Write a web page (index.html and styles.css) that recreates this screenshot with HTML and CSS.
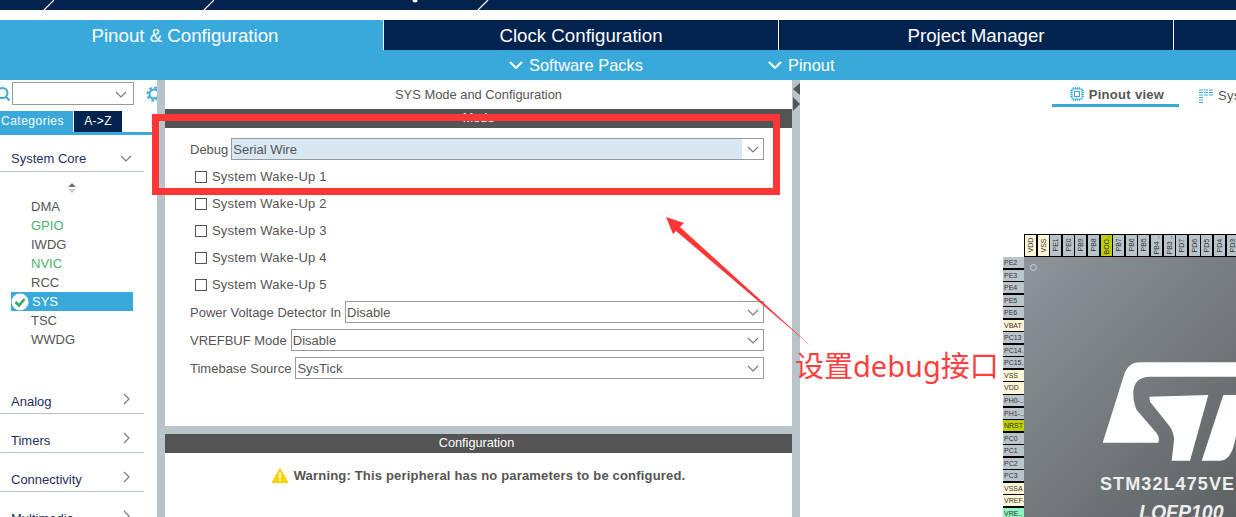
FILE: index.html
```html
<!DOCTYPE html>
<html lang="zh">

<head>
    <meta charset="UTF-8">
    <title>SYS Mode and Configuration</title>
    <link rel="stylesheet" href="styles.css">
</head>

<body>
    <div class="top-strip">
        <svg class="strip-marks" width="520" height="10" viewBox="0 0 520 10">
            <path d="M44 10 L54 0 M204 10 L214 0 M478 10 L488 0" stroke="#fff" stroke-width="1.2" fill="none" />
            <circle cx="415" cy="0" r="2.5" fill="#fff" />
        </svg>
    </div>

    <div class="main-tabs">
        <div class="main-tab active">Pinout &amp; Configuration</div>
        <div class="main-tab">Clock Configuration</div>
        <div class="main-tab">Project Manager</div>
        <div class="main-tab last"></div>
    </div>

    <div class="sub-bar">
        <div class="sub-item packs">
            <svg class="sub-chevron" viewBox="0 0 14 8"><path d="M1 1 L7 7 L13 1" /></svg>
            Software Packs
        </div>
        <div class="sub-item">
            <svg class="sub-chevron" viewBox="0 0 14 8"><path d="M1 1 L7 7 L13 1" /></svg>
            Pinout
        </div>
    </div>

    <div class="workspace">
        <aside class="sidebar">
            <div class="search-row">
                <svg class="search-icon" viewBox="0 0 12 14">
                    <circle cx="2.5" cy="6" r="5" />
                    <path d="M6 10 L9.5 13.5" />
                </svg>
                <div class="search-box">
                    <svg class="chevron-down" viewBox="0 0 12 7"><path d="M1 1 L6 6 L11 1" /></svg>
                </div>
                <svg class="gear-icon" viewBox="0 0 16 16">
                    <circle cx="8" cy="8" r="4.6" fill="none" stroke="#39a9dc" stroke-width="2" />
                    <circle cx="8" cy="8" r="6.6" fill="none" stroke="#39a9dc" stroke-width="2" stroke-dasharray="2.6 2.58" />
                </svg>
            </div>
            <div class="side-tabs">
                <div class="side-tab active">Categories</div>
                <div class="side-tab">A-&gt;Z</div>
            </div>

            <div class="group first">
                <span>System Core</span>
                <svg class="chevron-down" viewBox="0 0 12 7"><path d="M1 1 L6 6 L11 1" /></svg>
            </div>
            <div class="scroll-arrows">
                <div class="arrow-up"></div>
                <div class="arrow-down"></div>
            </div>
            <ul class="peripherals">
                <li>DMA</li>
                <li class="ok">GPIO</li>
                <li>IWDG</li>
                <li class="ok">NVIC</li>
                <li>RCC</li>
                <li class="selected">
                    <svg class="check-icon" viewBox="0 0 18 18">
                        <circle cx="9" cy="9" r="8.5" fill="#fff" />
                        <path d="M4.5 9 L8 12.5 L13.5 6" fill="none" stroke="#3aa76d" stroke-width="2.6" />
                    </svg>
                    SYS
                </li>
                <li>TSC</li>
                <li>WWDG</li>
            </ul>

            <div class="group analog">
                <span>Analog</span>
                <svg class="chevron-right" viewBox="0 0 7 12"><path d="M1 1 L6 6 L1 11" /></svg>
            </div>
            <div class="group">
                <span>Timers</span>
                <svg class="chevron-right" viewBox="0 0 7 12"><path d="M1 1 L6 6 L1 11" /></svg>
            </div>
            <div class="group">
                <span>Connectivity</span>
                <svg class="chevron-right" viewBox="0 0 7 12"><path d="M1 1 L6 6 L1 11" /></svg>
            </div>
            <div class="group">
                <span>Multimedia</span>
                <svg class="chevron-right" viewBox="0 0 7 12"><path d="M1 1 L6 6 L1 11" /></svg>
            </div>
        </aside>

        <div class="gutter"></div>

        <section class="config-panel">
            <div class="mode-area">
                <div class="panel-title">SYS Mode and Configuration</div>
                <div class="dark-bar">Mode</div>
                <div class="mode-form">
                    <div class="field debug">
                        <label>Debug</label>
                        <div class="combo filled">
                            <span>Serial Wire</span>
                            <i><svg class="chevron-down" viewBox="0 0 12 7"><path d="M1 1 L6 6 L11 1" /></svg></i>
                        </div>
                    </div>
                    <div class="checks">
                        <div class="check-row"><b></b>System Wake-Up 1</div>
                        <div class="check-row"><b></b>System Wake-Up 2</div>
                        <div class="check-row"><b></b>System Wake-Up 3</div>
                        <div class="check-row"><b></b>System Wake-Up 4</div>
                        <div class="check-row"><b></b>System Wake-Up 5</div>
                    </div>
                    <div class="field">
                        <label>Power Voltage Detector In</label>
                        <div class="combo">
                            <span>Disable</span>
                            <i><svg class="chevron-down" viewBox="0 0 12 7"><path d="M1 1 L6 6 L11 1" /></svg></i>
                        </div>
                    </div>
                    <div class="field">
                        <label>VREFBUF Mode</label>
                        <div class="combo">
                            <span>Disable</span>
                            <i><svg class="chevron-down" viewBox="0 0 12 7"><path d="M1 1 L6 6 L11 1" /></svg></i>
                        </div>
                    </div>
                    <div class="field">
                        <label>Timebase Source</label>
                        <div class="combo">
                            <span>SysTick</span>
                            <i><svg class="chevron-down" viewBox="0 0 12 7"><path d="M1 1 L6 6 L11 1" /></svg></i>
                        </div>
                    </div>
                </div>
            </div>
            <div class="config-area">
                <div class="dark-bar config-title">Configuration</div>
                <div class="warning">
                    <svg class="warning-icon" viewBox="0 0 16 15">
                        <path d="M8 0.5 L15.8 14.5 L0.2 14.5 Z" fill="#ffcf00" stroke="#ffcf00" stroke-linejoin="round" />
                        <path d="M8 4.5 L8 10 M8 11.2 L8 13" stroke="#fff" stroke-width="1.8" />
                    </svg>
                    Warning: This peripheral has no parameters to be configured.
                </div>
            </div>
        </section>

        <div class="gutter collapse">
            <svg width="8" height="32" viewBox="0 0 8 32">
                <path d="M8 3 L1 9 L8 15 Z M1 17 L8 24 L1 31 Z" fill="#555" />
            </svg>
        </div>

        <section class="pinout">
            <div class="view-tabs">
                <div class="view-tab active">
                    <svg class="view-icon" viewBox="0 0 14 14">
                        <rect x="2" y="2" width="10" height="10" fill="none" stroke="#39a9dc" />
                        <rect x="4.5" y="4.5" width="5" height="5" fill="none" stroke="#39a9dc" />
                        <path d="M3.5 0 V2 M5.5 0 V2 M7.5 0 V2 M9.5 0 V2 M3.5 12 V14 M5.5 12 V14 M7.5 12 V14 M9.5 12 V14 M0 3.5 H2 M0 5.5 H2 M0 7.5 H2 M0 9.5 H2 M12 3.5 H14 M12 5.5 H14 M12 7.5 H14 M12 9.5 H14" stroke="#39a9dc" stroke-width="0.9" />
                    </svg>
                    Pinout view
                </div>
                <div class="view-tab">
                    <svg class="view-icon" viewBox="0 0 14 14">
                        <path d="M0 1 H4 M5 1 H9 M10 1 H14 M0 3.5 H4 M5 3.5 H9 M10 3.5 H14 M0 6 H4 M5 6 H9 M10 6 H14 M0 8.5 H4 M0 11 H4 M0 13.5 H4" stroke="#39a9dc" stroke-width="1.1" />
                    </svg>
                    System view
                </div>
            </div>

            <div class="chip">
                <div class="chip-corner"></div>
                <div class="pins-top">
                    <div class="pin power"><span>VDD</span></div>
                    <div class="pin power"><span>VSS</span></div>
                    <div class="pin"><span>PE1</span></div>
                    <div class="pin"><span>PE0</span></div>
                    <div class="pin"><span>PB9</span></div>
                    <div class="pin"><span>PB8</span></div>
                    <div class="pin boot"><span>BOO..</span></div>
                    <div class="pin"><span>PB7</span></div>
                    <div class="pin"><span>PB6</span></div>
                    <div class="pin"><span>PB5</span></div>
                    <div class="pin"><span>PB4 ..</span></div>
                    <div class="pin"><span>PB3 ..</span></div>
                    <div class="pin"><span>PD7</span></div>
                    <div class="pin"><span>PD6</span></div>
                    <div class="pin"><span>PD5</span></div>
                    <div class="pin"><span>PD4</span></div>
                    <div class="pin"><span>PD3</span></div>
                </div>
                <div class="pins-left">
                    <div class="pin">PE2</div>
                    <div class="pin">PE3</div>
                    <div class="pin">PE4</div>
                    <div class="pin">PE5</div>
                    <div class="pin">PE6</div>
                    <div class="pin power">VBAT</div>
                    <div class="pin">PC13</div>
                    <div class="pin">PC14..</div>
                    <div class="pin">PC15..</div>
                    <div class="pin power">VSS</div>
                    <div class="pin power">VDD</div>
                    <div class="pin">PH0-..</div>
                    <div class="pin">PH1-..</div>
                    <div class="pin boot">NRST</div>
                    <div class="pin">PC0</div>
                    <div class="pin">PC1</div>
                    <div class="pin">PC2</div>
                    <div class="pin">PC3</div>
                    <div class="pin power">VSSA</div>
                    <div class="pin power">VREF-</div>
                    <div class="pin ref">VRE..</div>
                </div>
                <div class="chip-body">
                    <div class="pin-one"></div>
                    <svg class="st-logo" width="212" height="260" viewBox="0 0 212 260">
                        <path d="M78.7 185.7 L100 118 Q104 105.3 116 105.3 L212 105.3 L212 119.7 L126 119.7 Q109.3 120 109.3 136.3 Q109.3 146 112.7 153 L132.7 176.3 Q136 181 134.3 185.7 Z" fill="#fff" />
                        <path d="M125.3 139.7 L184.3 138 L166 203.7 L147.7 203.7 L150 183 Q150 176 146 169.7 L126 144.7 Z" fill="#fff" />
                        <path d="M199.3 138 L212 138 L212 179 Q208 203.7 196 203.7 L177.7 203.7 Z" fill="#fff" />
                    </svg>
                    <div class="chip-name">STM32L475VE</div>
                    <div class="chip-package">LQFP100</div>
                </div>
            </div>
        </section>
    </div>

    <!-- annotation drawn over the screenshot -->
    <div class="mark-box"></div>
    <svg class="mark-arrow" width="160" height="140" viewBox="0 0 160 140">
        <path d="M6 7 L24 13 L20 17 L152 137 L16 21 L13 24 Z" fill="#ff3636" />
    </svg>
    <div class="mark-text">设置debug接口</div>
</body>

</html>
```

FILE: styles.css
```css
* {
    box-sizing: border-box;
}

body {
    margin: 0;
    width: 1236px;
    height: 517px;
    overflow: hidden;
    position: relative;
    background: white;
    font-family: "Liberation Sans", Arial, sans-serif;
    font-size: 13px;
    color: #555;
}

svg {
    display: block;
    flex: none;
}

.top-strip {
    height: 10px;
    background: #02234d;
}

.main-tabs {
    display: flex;
    height: 30px;
    margin-top: 10px;
    gap: 1px;
}

.main-tab {
    width: 394px;
    background: #02234d;
    color: white;
    font-size: 18.7px;
    line-height: 31px;
    text-align: center;
}

.main-tab.active {
    width: 383px;
    padding-right: 13px;
    background: #39a9dc;
}

.main-tab.last {
    flex: 1;
}

.sub-bar {
    display: flex;
    height: 30px;
    padding-left: 509px;
    background: #39a9dc;
    color: white;
    font-size: 16.4px;
}

.sub-item {
    display: flex;
    align-items: center;
    gap: 6px;
}

.sub-item.packs {
    width: 259px;
}

.sub-chevron {
    width: 14px;
    height: 8px;
    fill: none;
    stroke: white;
    stroke-width: 2;
}

.workspace {
    display: flex;
    height: 437px;
}

.gutter {
    width: 8px;
    background: #b8c4ca;
}

/* left column */
.sidebar {
    width: 157px;
    overflow: hidden;
}

.search-row {
    display: flex;
    align-items: center;
    height: 23px;
    margin-top: 2px;
}

.search-icon {
    width: 12px;
    height: 14px;
    fill: none;
    stroke: #39a9dc;
    stroke-width: 2;
}

.search-box {
    position: relative;
    width: 122px;
    height: 23px;
    border: 1px solid #999;
}

.search-box .chevron-down {
    position: absolute;
    right: 6px;
    top: 8px;
}

.chevron-down {
    width: 12px;
    height: 7px;
    fill: none;
    stroke: #777;
    stroke-width: 1.1;
}

.chevron-right {
    width: 7px;
    height: 12px;
    fill: none;
    stroke: #777;
    stroke-width: 1.1;
}

.gear-icon {
    width: 16px;
    height: 16px;
    margin-left: 12px;
    margin-right: -5px;
}

.side-tabs {
    display: flex;
    gap: 1px;
    height: 24px;
    margin-top: 6px;
    border-bottom: 3px solid #39a9dc;
}

.side-tab {
    width: 48px;
    background: #02234d;
    color: white;
    font-size: 12px;
    letter-spacing: 0.3px;
    line-height: 21px;
    text-align: center;
}

.side-tab.active {
    width: 73px;
    padding-left: 1px;
    background: #39a9dc;
    letter-spacing: 0.5px;
    text-align: left;
}

.group {
    display: flex;
    align-items: flex-end;
    justify-content: space-between;
    width: 144px;
    height: 39px;
    padding: 0 14px 3px 11px;
    border-bottom: 1px solid #b8c4ca;
    color: #1f2f63;
    line-height: 16px;
}

.group svg {
    margin-bottom: 5px;
}

.group.first {
    height: 37px;
    padding: 0 12px 4px 11px;
}

.scroll-arrows {
    display: flex;
    flex-direction: column;
    align-items: center;
    gap: 2px;
    width: 143px;
    height: 25px;
    padding-top: 11px;
}

.arrow-up {
    border: 4px solid transparent;
    border-top: 0;
    border-bottom: 4px solid #777;
}

.arrow-down {
    border: 4px solid transparent;
    border-bottom: 0;
    border-top: 4px solid #ccc;
}

.peripherals {
    list-style: none;
    margin: 0;
    padding: 0 0 0 11px;
    width: 133px;
}

.peripherals li {
    height: 19px;
    padding-left: 20px;
    line-height: 19px;
}

.peripherals .ok {
    color: #4cb56f;
}

.peripherals .selected {
    display: flex;
    align-items: center;
    gap: 3px;
    padding-left: 0;
    background: #39a9dc;
    color: white;
}

.check-icon {
    width: 18px;
    height: 18px;
}

.group.analog {
    height: 65px;
}

/* middle column */
.config-panel {
    display: flex;
    flex-direction: column;
    width: 627px;
    background: #b8c4ca;
}

.mode-area {
    height: 346px;
    background: white;
}

.panel-title {
    height: 29px;
    font-size: 12.9px;
    line-height: 30px;
    text-align: center;
}

.dark-bar {
    height: 19px;
    background: #535453;
    color: white;
    font-size: 12.7px;
    line-height: 19px;
    text-align: center;
}

.config-title {
    padding-right: 4px;
}

.mode-form {
    padding: 10px 28px 0 25px;
}

.field {
    display: flex;
    align-items: center;
    gap: 4px;
    height: 22px;
    margin-bottom: 6px;
}

.field.debug {
    gap: 3px;
}

.combo {
    display: flex;
    flex: 1;
    height: 22px;
    border: 1px solid #999;
    line-height: 21px;
}

.combo span {
    flex: 1;
    padding-left: 1px;
}

.combo i {
    display: flex;
    align-items: center;
    justify-content: center;
    width: 21px;
}

.combo.filled span {
    background: #d8e7f4;
}

.checks {
    margin: -3px 0 3px;
}

.check-row {
    display: flex;
    align-items: center;
    gap: 5px;
    height: 27px;
    padding-left: 5px;
    letter-spacing: 0.2px;
}

.check-row b {
    width: 12px;
    height: 12px;
    border: 1px solid #555;
}

.config-area {
    flex: 1;
    margin-top: 8px;
    background: white;
}

.warning {
    display: flex;
    align-items: center;
    justify-content: center;
    gap: 6px;
    height: 44px;
    font-weight: bold;
    letter-spacing: 0.18px;
}

.warning-icon {
    width: 16px;
    height: 15px;
}

/* right column */
.pinout {
    position: relative;
    flex: 1;
    margin-left: 1px;
    overflow: hidden;
}

.view-tabs {
    display: flex;
    gap: 20px;
    padding-left: 251px;
}

.view-tab {
    display: flex;
    align-items: center;
    justify-content: center;
    flex: none;
    gap: 5px;
    width: 127px;
    height: 27px;
    padding: 4px 0 0 3px;
    font-weight: bold;
    letter-spacing: 0.3px;
}

.view-tab.active {
    border-bottom: 3px solid #39a9dc;
}

.view-tab:last-child {
    justify-content: flex-start;
    padding-left: 0;
    font-weight: normal;
}

.view-icon {
    width: 14px;
    height: 14px;
}

/* chip sits on the free canvas of the pinout view */
.chip {
    position: absolute;
    left: 202px;
    top: 154px;
    display: grid;
    grid-template-columns: 21px 240px;
    grid-template-rows: 23px 260px;
}

.pins-top {
    display: flex;
    gap: 1.5px;
    padding: 1px 0 1.5px 1px;
    background: black;
}

.pins-top .pin {
    width: 11.1px;
    flex: none;
}

.pins-top span {
    display: block;
    writing-mode: vertical-rl;
    transform: rotate(180deg);
    height: 100%;
    line-height: 11px;
    text-align: center;
    white-space: nowrap;
}

.pins-left {
    display: flex;
    flex-direction: column;
    gap: 1.5px;
    background: black;
}

.pins-left .pin {
    height: 11.05px;
    flex: none;
    padding-left: 1px;
    line-height: 11px;
    overflow: hidden;
}

.pin {
    background: #b9c5cb;
    color: #333;
    font-size: 7px;
}

.pin.power {
    background: #fff6d5;
}

.pin.boot {
    background: #bfcf00;
}

.pin.ref {
    background: #8ff5c0;
}

.chip-body {
    position: relative;
    background: linear-gradient(135deg, #8e969b 0%, #5a5e5f 100%);
    overflow: hidden;
}

.pin-one {
    position: absolute;
    left: 6px;
    top: 7px;
    width: 7px;
    height: 7px;
    border: 1px solid #ccd;
    border-radius: 50%;
    background: #8e969b;
}

.st-logo {
    position: absolute;
    left: 0;
    top: 0;
}

.chip-name,
.chip-package {
    position: absolute;
    color: #eee;
    font-weight: bold;
    white-space: nowrap;
}

.chip-name {
    left: 76px;
    top: 217px;
    font-size: 18px;
    letter-spacing: 1.1px;
}

.chip-package {
    left: 115px;
    top: 244px;
    font-size: 19.5px;
    font-style: italic;
}

/* red annotation */
.mark-box {
    position: absolute;
    left: 152px;
    top: 114px;
    width: 628px;
    height: 81px;
    border: 7px solid #ff3636;
}

.mark-arrow {
    position: absolute;
    left: 660px;
    top: 210px;
}

.mark-text {
    position: absolute;
    left: 795px;
    top: 346px;
    color: #ff3f3f;
    font-family: "Noto Sans", "Noto Sans CJK SC", sans-serif;
    font-size: 29px;
    line-height: 40px;
    white-space: nowrap;
}
```
